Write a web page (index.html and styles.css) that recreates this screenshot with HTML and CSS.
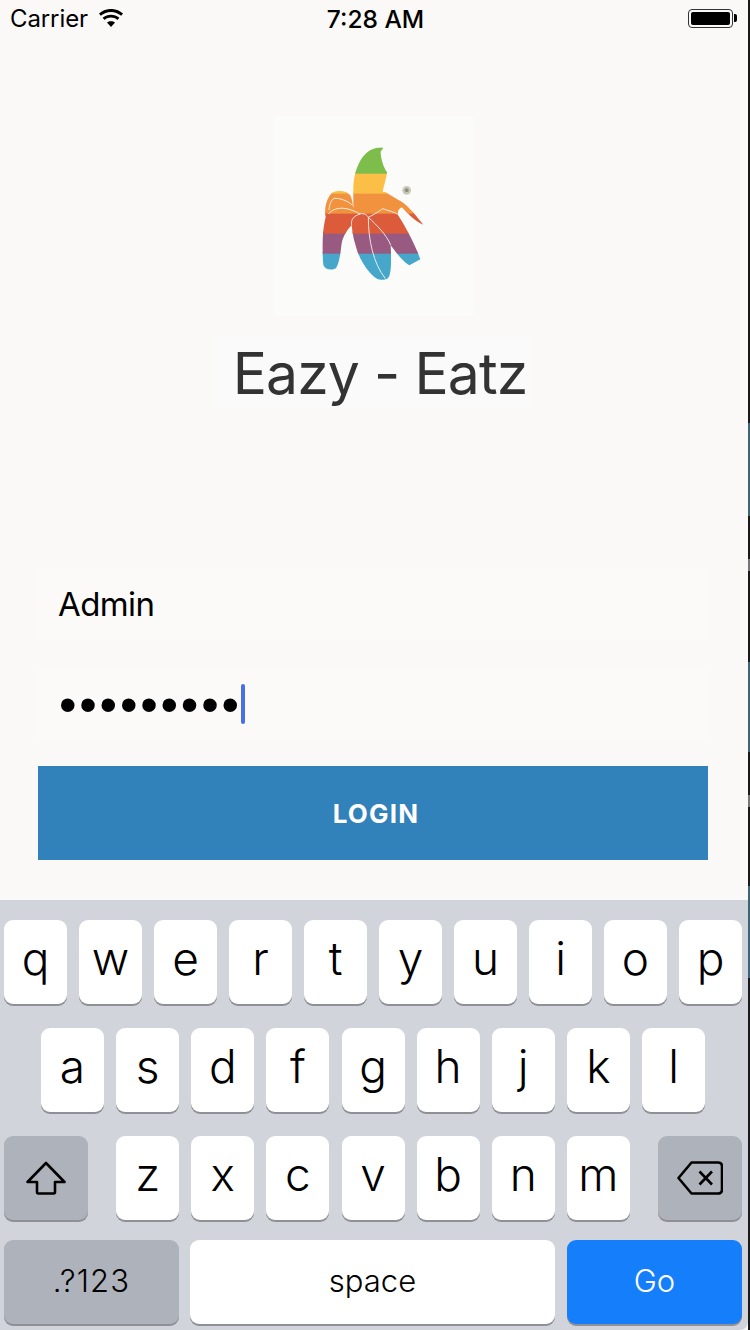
FILE: index.html
```html
<!DOCTYPE html>
<html lang="en">
<head>
<meta charset="utf-8">
<title>Eazy - Eatz</title>
<link rel="stylesheet" href="styles.css">
</head>
<body>
<div class="device">
  <main class="screen">
    <header class="status">
      <div class="status-left">
        <span class="carrier">Carrier</span>
        <svg class="wifi" viewBox="0 0 24 18" aria-hidden="true">
          <path d="M12 18 L8 13.6 C10.3 11.7 13.7 11.7 16 13.6 Z"/>
          <path d="M5.6 11 L3.6 8.8 C8.5 4.6 15.5 4.6 20.4 8.8 L18.4 11 C14.7 7.8 9.3 7.8 5.6 11 Z"/>
          <path d="M1.8 6.8 L0 4.6 C6.8 -1.6 17.2 -1.6 24 4.6 L22.2 6.8 C16.4 1.6 7.6 1.6 1.8 6.8 Z"/>
        </svg>
      </div>
      <span class="clock">7:28 AM</span>
      <div class="battery"><span class="battery-level"></span></div>
    </header>

    <section class="brand">
      <div class="logo-box">
        <svg class="logo" viewBox="39 18 600 600" aria-hidden="true">
          <defs>
            <clipPath id="banana">
              <path d="M280 296 L280 230 C282 190 295 150 320 128 C335 116 350 112 370 113 L362 125 C362 145 370 170 381 187 C378 210 370 235 368 245 C385 248 400 262 420 272 C445 285 470 320 490 344 C465 335 445 312 425 292 C418 295 414 302 412 312 C430 340 460 390 481 448 L448 466 C430 455 405 425 392 405 C393 430 395 470 390 490 C388 505 380 509 372 509 C355 510 345 505 330 488 C310 465 295 440 285 400 C280 385 277 365 275 345 C262 360 250 375 245 400 C242 420 240 455 228 475 C215 482 195 480 190 465 C185 420 187 360 197 322 C192 295 200 265 215 250 C230 240 255 240 270 255 C276 265 278 280 280 296 Z"/>
            </clipPath>
          </defs>
          <g clip-path="url(#banana)">
            <rect class="band-blue" x="180" y="425" width="320" height="95"/>
            <rect class="band-purple" x="180" y="365" width="320" height="66"/>
            <rect class="band-red" x="180" y="305" width="320" height="66"/>
            <rect class="band-orange" x="180" y="245" width="320" height="66"/>
            <rect class="band-yellow" x="180" y="185" width="320" height="66"/>
            <rect class="band-green" x="180" y="100" width="320" height="91"/>
          </g>
          <path class="seam" d="M205 312 C225 288 262 290 300 312 M207 300 C208 285 213 270 222 265 C240 264 262 272 278 286 M275 345 C272 330 280 318 300 312 C312 308 322 316 325 322 M325 322 C325 390 340 460 376 506 M325 322 C345 312 360 302 368 296 C385 302 400 305 412 312 M325 322 C350 345 380 375 392 405"/>
          <circle class="reg" cx="440" cy="241" r="13"/>
          <circle class="reg-inner" cx="440" cy="241" r="6"/>
        </svg>
      </div>
      <h1 class="title">Eazy - Eatz</h1>
    </section>

    <form class="login">
      <div class="field"><span class="value">Admin</span></div>
      <div class="field"><span class="dots">•••••••••</span><span class="caret"></span></div>
      <div class="button">LOGIN</div>
    </form>

    <section class="keyboard">
      <div class="row row-top">
        <div class="key">q</div><div class="key">w</div><div class="key">e</div><div class="key">r</div><div class="key">t</div><div class="key">y</div><div class="key">u</div><div class="key">i</div><div class="key">o</div><div class="key">p</div>
      </div>
      <div class="row row-mid">
        <div class="key">a</div><div class="key">s</div><div class="key">d</div><div class="key">f</div><div class="key">g</div><div class="key">h</div><div class="key">j</div><div class="key">k</div><div class="key">l</div>
      </div>
      <div class="row row-low">
        <div class="key key-fn key-side">
          <svg class="shift" viewBox="0 0 40 34" aria-hidden="true"><path d="M20 2 L38.5 21 L29 21 L29 31 Q29 32.5 27.5 32.5 L12.5 32.5 Q11 32.5 11 31 L11 21 L1.5 21 Z"/></svg>
        </div>
        <div class="letters">
          <div class="key">z</div><div class="key">x</div><div class="key">c</div><div class="key">v</div><div class="key">b</div><div class="key">n</div><div class="key">m</div>
        </div>
        <div class="key key-fn key-side">
          <svg class="backspace" viewBox="0 0 46 34" aria-hidden="true"><path d="M14.5 1.5 L41 1.5 Q45 1.5 45 5.5 L45 28.5 Q45 32.5 41 32.5 L14.5 32.5 L1.5 17 Z"/><path d="M22.5 10.5 L35 23.5 M35 10.5 L22.5 23.5"/></svg>
        </div>
      </div>
      <div class="row row-bottom">
        <div class="key key-fn key-wide key-label key-num">.?123</div>
        <div class="key key-space key-label">space</div>
        <div class="key key-go key-wide key-label">Go</div>
      </div>
    </section>
  </main>
  <aside class="edge" aria-hidden="true">
    <span class="edge-dark edge-a"></span>
    <span class="edge-teal edge-b"></span>
    <span class="edge-dark edge-c"></span>
    <span class="edge-gray"></span>
    <span class="edge-dark edge-d"></span>
    <span class="edge-teal edge-e"></span>
    <span class="edge-dark edge-f"></span>
    <span class="edge-gray"></span>
    <span class="edge-dark edge-g"></span>
    <span class="edge-teal edge-h"></span>
    <span class="edge-dark edge-i"></span>
  </aside>
</div>
</body>
</html>
```

FILE: styles.css
```css
* { box-sizing: border-box; }

html, body {
  margin: 0;
  padding: 0;
  background: #1a1a1a;
}

body {
  width: 750px;
  height: 1330px;
  overflow: hidden;
  font-family: Inter, "Liberation Sans", sans-serif;
  color: #000;
}

.device {
  display: flex;
  width: 750px;
  height: 1330px;
}

.screen {
  display: flex;
  flex-direction: column;
  width: 748px;
  height: 1330px;
  background: #faf9f7;
}

/* status bar */
.status {
  display: grid;
  grid-template-columns: 1fr auto 1fr;
  align-items: center;
  height: 38px;
  padding: 0 15px 0 10px;
  flex: none;
}

.status-left {
  display: flex;
  align-items: center;
  gap: 11px;
}

.carrier {
  font-size: 24px;
  font-weight: 400;
  line-height: 38px;
  letter-spacing: -0.1px;
}

.wifi {
  width: 24px;
  height: 18px;
  margin-bottom: 2px;
  fill: #000;
}

.clock {
  font-size: 24.5px;
  font-weight: 500;
  line-height: 38px;
  margin-left: 8px;
}

.battery {
  justify-self: end;
  position: relative;
  width: 45px;
  height: 19px;
  margin-bottom: 2px;
  padding: 2px;
  border: 1.5px solid #333;
  border-radius: 4px;
}

.battery::after {
  content: "";
  position: absolute;
  right: -5px;
  top: 4px;
  width: 3px;
  height: 8px;
  background: #000;
  border-radius: 0 2px 2px 0;
}

.battery-level {
  display: block;
  height: 100%;
  background: #000;
  border-radius: 2px;
}

/* brand */
.brand {
  display: flex;
  flex-direction: column;
  height: 530px;
  padding-top: 78px;
  flex: none;
}

.logo-box {
  width: 200px;
  height: 200px;
  margin-left: 273px;
  background: #fbfbf9;
}

.logo {
  display: block;
  width: 200px;
  height: 200px;
  filter: blur(0.6px);
}

.band-green { fill: #7dbd4b; }
.band-yellow { fill: #fbbf47; }
.band-orange { fill: #f0923e; }
.band-red { fill: #dc5b3a; }
.band-purple { fill: #985a80; }
.band-blue { fill: #47a7cb; }

.seam {
  fill: none;
  stroke: #fbfaf8;
  stroke-width: 3;
  stroke-opacity: 0.85;
}

.reg { fill: #c9c9ba; }
.reg-inner { fill: #8f8f80; }

.title {
  width: 317px;
  height: 71px;
  margin: 20px 0 0 213px;
  background: #fafafa;
  font-size: 57px;
  font-weight: 400;
  letter-spacing: -0.9px;
  line-height: 76px;
  text-align: center;
  color: #333;
  padding-left: 17px;
  white-space: nowrap;
}

/* login */
.login {
  display: flex;
  flex-direction: column;
  flex: none;
  height: 332px;
  padding: 0 40px 0 38px;
}

.field {
  display: flex;
  align-items: center;
  height: 72px;
  margin-bottom: 28px;
  padding-left: 20px;
  background: #fbfaf8;
}

.field + .field {
  margin-bottom: 26px;
}

.value {
  font-size: 33px;
  letter-spacing: -0.6px;
  line-height: 72px;
}

.dots {
  font-family: "Liberation Sans", sans-serif;
  font-size: 50px;
  letter-spacing: 2.8px;
  line-height: 72px;
  padding-left: 1px;
  padding-top: 2px;
}

.caret {
  width: 4px;
  height: 40px;
  margin-left: -1px;
  border-radius: 2px;
  background: #4a6ee8;
}

.button {
  display: flex;
  align-items: center;
  justify-content: center;
  height: 94px;
  padding-left: 6px;
  background: #3182bb;
  color: #fff;
  font-size: 26px;
  font-weight: 700;
  letter-spacing: 1.2px;
}

/* keyboard */
.keyboard {
  display: flex;
  flex-direction: column;
  flex: none;
  height: 430px;
  padding-top: 20px;
  background: #d1d4db;
  border-bottom-right-radius: 8px;
}

.row {
  display: flex;
  height: 84px;
  margin-bottom: 24px;
  gap: 12.125px;
}

.row-top {
  padding-left: 4px;
  gap: 12px;
}

.row-mid { padding-left: 41px; }

.row-low {
  justify-content: space-between;
  padding: 0 6px 0 4px;
  margin-bottom: 20px;
}

.row-bottom {
  padding-left: 4px;
  margin-bottom: 0;
  gap: 11px;
}

.letters {
  display: flex;
  gap: 12.125px;
}

.key {
  display: flex;
  align-items: center;
  justify-content: center;
  width: 63px;
  height: 84px;
  padding-bottom: 8px;
  background: #fff;
  border-radius: 9px;
  box-shadow: 0 2px 0 #8e9095;
  font-size: 46px;
  font-weight: 300;
}

.key-fn { background: #aeb2bb; }
.key-side { width: 84px; }
.key-wide { width: 175px; }
.key-space { width: 365px; }
.key-go {
  margin-left: 1px;
  background: #157efb;
  color: #fff;
}

.key-label {
  font-size: 31px;
  font-weight: 300;
  padding-bottom: 4px;
}

.key-num { letter-spacing: 1.2px; }

.shift,
.backspace {
  height: 34px;
  margin-top: 8px;
  fill: none;
  stroke: #000;
  stroke-width: 2.6;
  stroke-linejoin: round;
}

.shift { width: 40px; }
.backspace { width: 46px; }

/* strip of the window behind, at the right edge */
.edge {
  display: flex;
  flex-direction: column;
  width: 2px;
  height: 1330px;
  flex: none;
}

.edge-dark { display: block; background: #1a1a1a; }
.edge-teal { display: block; background: #3d6577; }
.edge-gray { display: block; height: 12px; background: #77777a; }
.edge-a { height: 423px; }
.edge-b { height: 93px; }
.edge-c { height: 43px; }
.edge-d { height: 91px; }
.edge-e { height: 91px; }
.edge-f { height: 43px; }
.edge-g { height: 79px; }
.edge-h { height: 92px; }
.edge-i { height: 352px; }
```
